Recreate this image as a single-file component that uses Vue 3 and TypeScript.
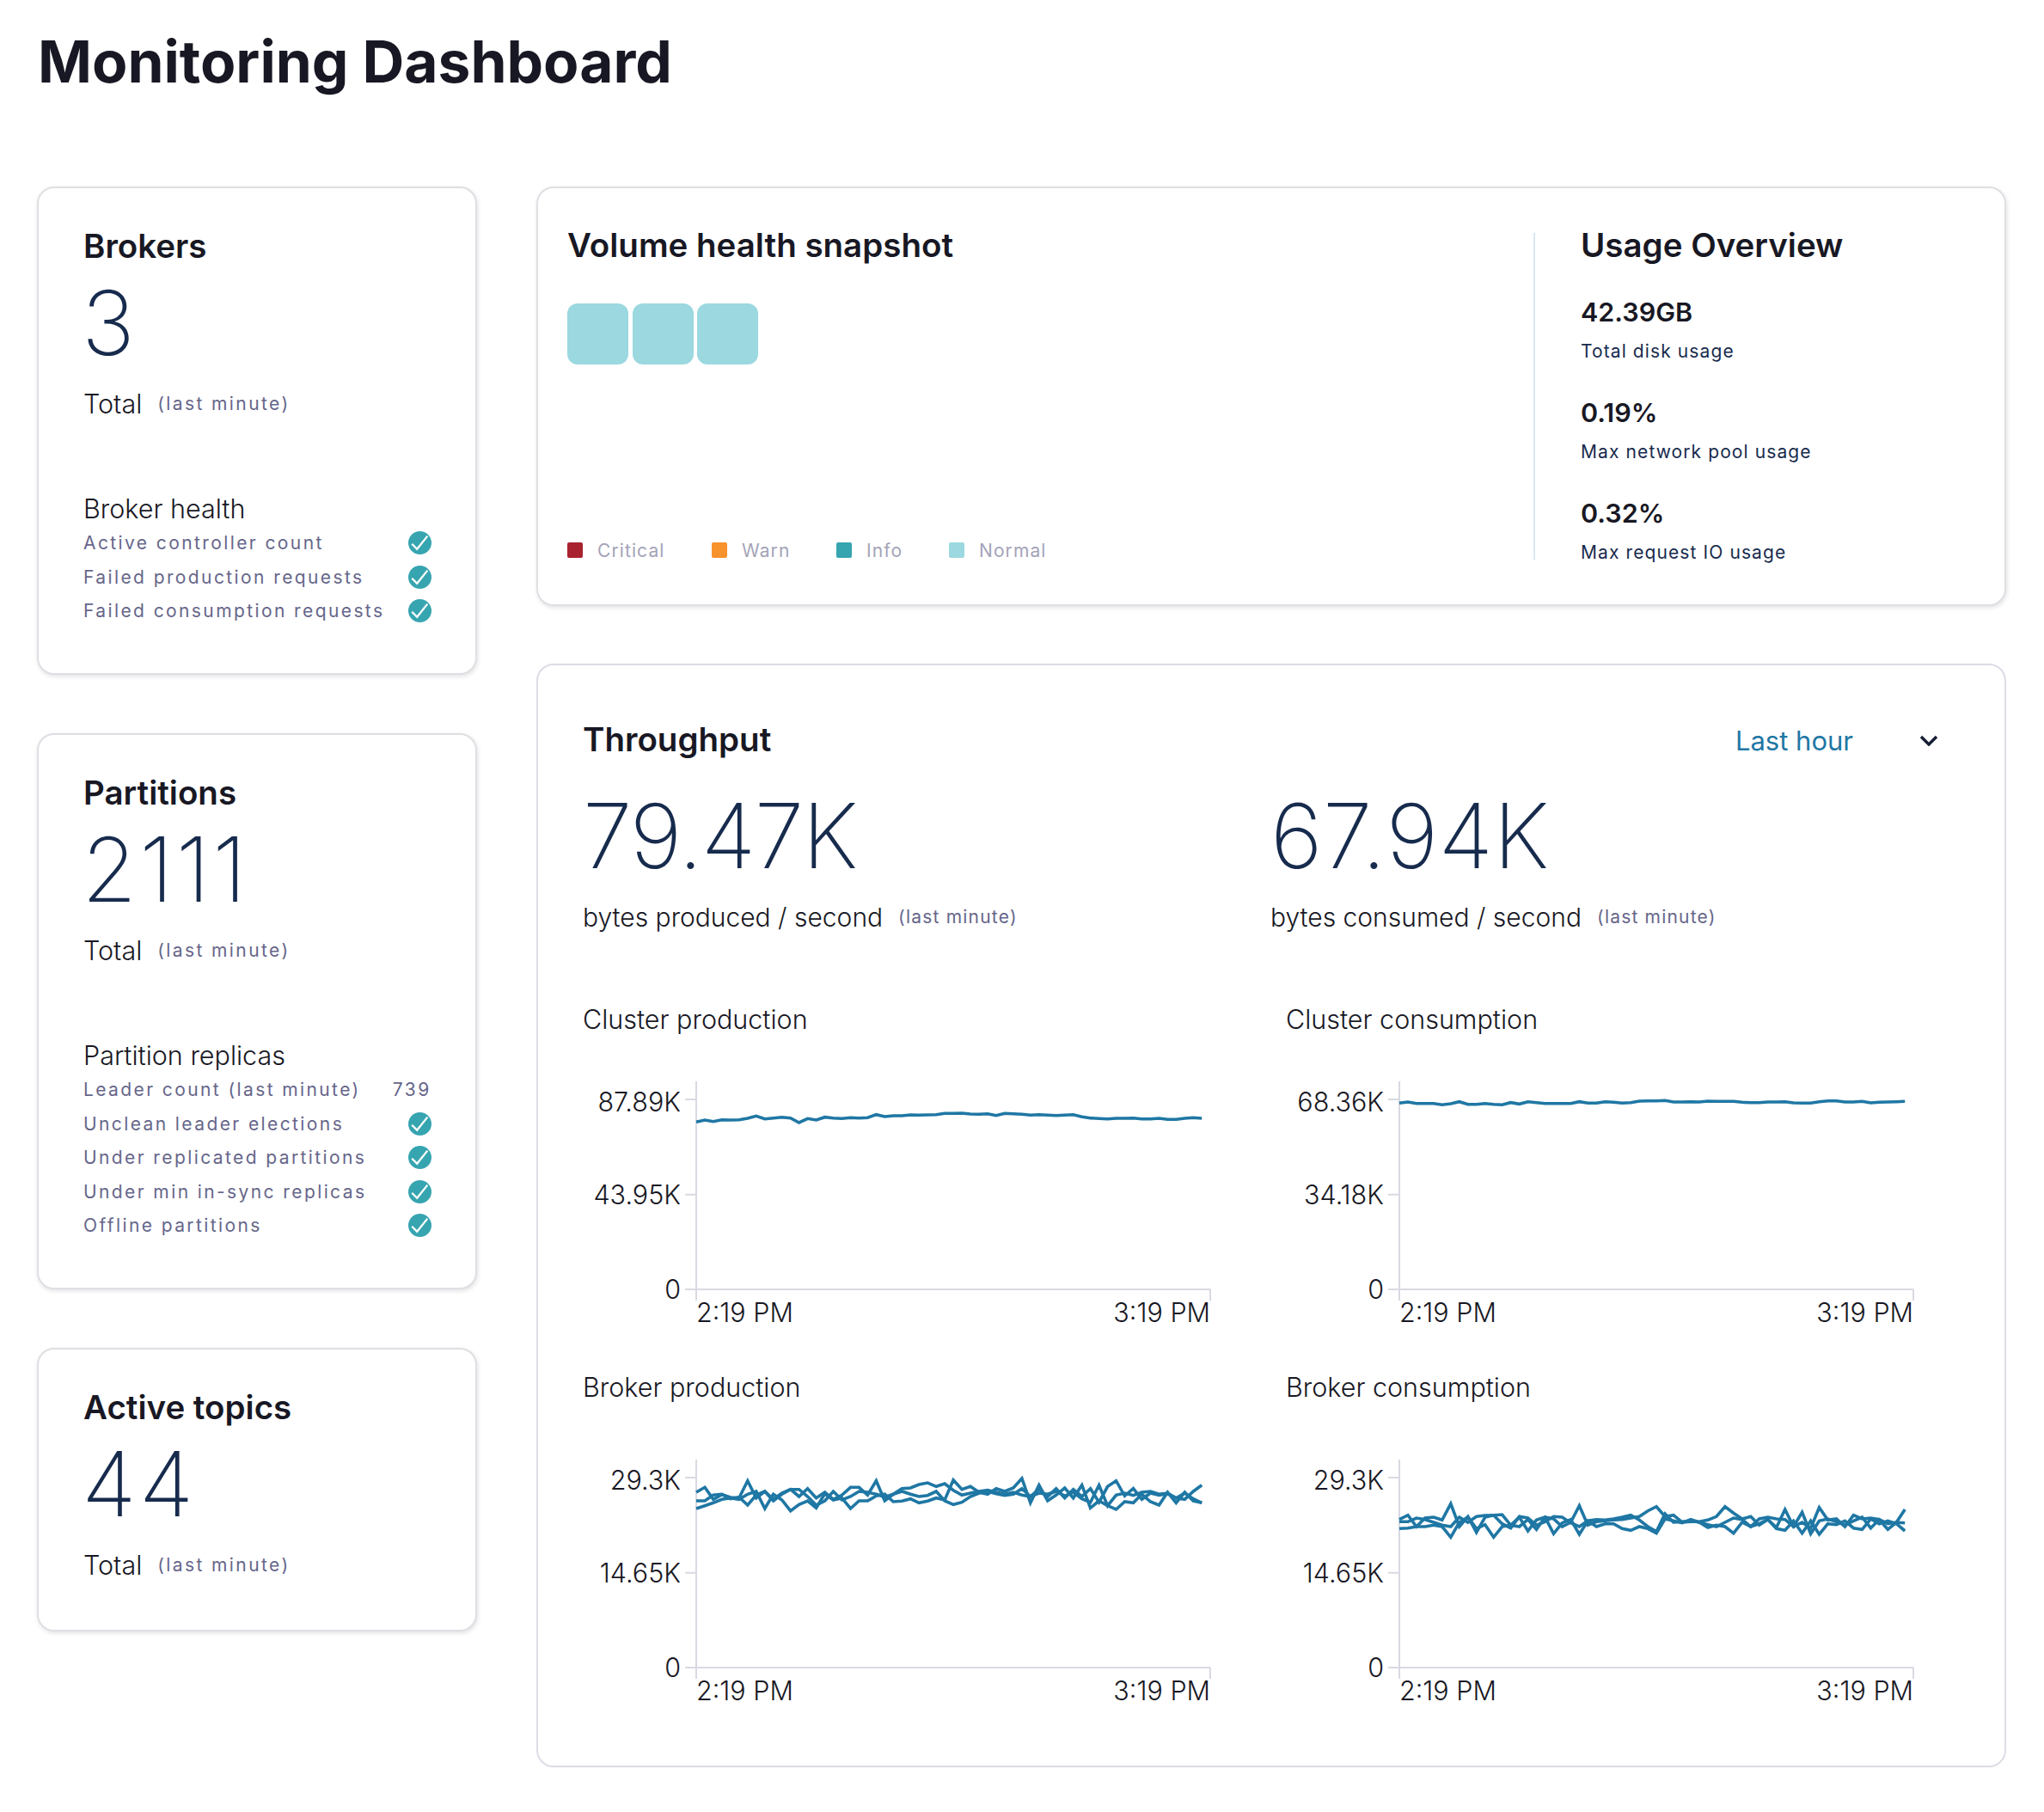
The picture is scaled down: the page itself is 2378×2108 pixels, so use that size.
<script setup lang="ts">
type Row = { label: string; value?: string }
type Stat = { title: string; total: string; section?: string; rows?: Row[] }
type Chart = { title: string; top: string; mid: string; series: number[][]; offset: number; later?: boolean }

const stats: Stat[] = [
  {
    title: 'Brokers',
    total: '3',
    section: 'Broker health',
    rows: [
      { label: 'Active controller count' },
      { label: 'Failed production requests' },
      { label: 'Failed consumption requests' },
    ],
  },
  {
    title: 'Partitions',
    total: '2111',
    section: 'Partition replicas',
    rows: [
      { label: 'Leader count (last minute)', value: '739' },
      { label: 'Unclean leader elections' },
      { label: 'Under replicated partitions' },
      { label: 'Under min in-sync replicas' },
      { label: 'Offline partitions' },
    ],
  },
  { title: 'Active topics', total: '44' },
]

const legend = [
  { name: 'Critical', color: '#a8222f', width: 168 },
  { name: 'Warn', color: '#f7922c', width: 145 },
  { name: 'Info', color: '#36a5b0', width: 131 },
  { name: 'Normal', color: '#9bd8df', width: 120 },
]

const usage = [
  { value: '42.39GB', label: 'Total disk usage' },
  { value: '0.19%', label: 'Max network pool usage' },
  { value: '0.32%', label: 'Max request IO usage' },
]

const totals = [
  { value: '79.47K', label: 'bytes produced / second', spacing: -1.8 },
  { value: '67.94K', label: 'bytes consumed / second', spacing: 0.4 },
]

// y values read off the reference, in crop pixels
const charts: Chart[] = [
  {
    title: 'Cluster production',
    top: '87.89K',
    mid: '43.95K',
    offset: -100,
    series: [
      [493, 486, 491, 485, 486, 485, 480, 472, 482, 479, 476, 479, 495, 481, 486, 476, 479, 481, 478, 479, 478, 467, 474, 471, 471, 468, 469, 468, 467, 463, 463, 462, 465, 466, 464, 470, 463, 464, 466, 469, 467, 469, 470, 469, 467, 475, 479, 481, 482, 480, 480, 479, 482, 482, 480, 484, 484, 480, 478, 480],
    ],
  },
  {
    title: 'Cluster consumption',
    top: '68.36K',
    mid: '34.18K',
    offset: -100,
    series: [
      [427, 423, 428, 428, 428, 433, 429, 422, 431, 431, 428, 431, 433, 425, 430, 422, 425, 428, 428, 428, 428, 422, 427, 427, 422, 424, 427, 425, 420, 419, 419, 418, 423, 423, 422, 423, 420, 421, 421, 421, 424, 425, 425, 423, 423, 422, 426, 427, 427, 422, 419, 419, 423, 423, 421, 426, 424, 423, 422, 421],
    ],
  },
  {
    title: 'Broker production',
    top: '29.3K',
    mid: '14.65K',
    offset: -20,
    later: true,
    series: [
      [225, 208, 250, 233, 243, 245, 185, 245, 222, 250, 228, 215, 240, 212, 245, 225, 250, 235, 208, 208, 235, 185, 255, 232, 212, 210, 198, 192, 205, 195, 218, 235, 228, 222, 218, 225, 232, 225, 235, 240, 215, 240, 212, 245, 215, 240, 212, 260, 205, 185, 238, 212, 250, 228, 235, 230, 245, 250, 222, 200],
      [255, 255, 235, 232, 248, 242, 270, 235, 222, 255, 232, 215, 215, 240, 270, 255, 222, 252, 240, 222, 225, 232, 242, 232, 222, 232, 240, 236, 222, 255, 268, 260, 240, 228, 222, 230, 236, 232, 212, 240, 228, 232, 222, 238, 225, 248, 260, 200, 272, 235, 228, 236, 225, 222, 232, 228, 245, 228, 248, 262],
      [282, 272, 262, 250, 245, 250, 232, 222, 282, 232, 252, 290, 268, 255, 280, 230, 252, 245, 282, 255, 255, 238, 232, 258, 256, 248, 262, 256, 245, 252, 182, 215, 205, 225, 232, 212, 222, 210, 177, 262, 200, 255, 235, 210, 245, 200, 280, 255, 272, 285, 258, 262, 232, 258, 270, 225, 262, 225, 255, 262],
    ],
  },
  {
    title: 'Broker consumption',
    top: '29.3K',
    mid: '14.65K',
    offset: -20,
    later: true,
    series: [
      [320, 305, 345, 315, 312, 322, 265, 345, 310, 365, 312, 305, 303, 340, 345, 320, 355, 312, 318, 345, 330, 272, 340, 328, 325, 322, 320, 315, 310, 290, 275, 310, 305, 330, 328, 328, 322, 310, 275, 298, 318, 310, 340, 320, 348, 285, 345, 330, 350, 278, 322, 318, 345, 305, 318, 315, 320, 355, 330, 285],
      [328, 328, 315, 320, 330, 340, 345, 312, 330, 310, 306, 305, 335, 350, 310, 315, 340, 328, 310, 312, 332, 345, 325, 320, 322, 318, 312, 305, 322, 345, 362, 300, 330, 328, 325, 330, 338, 345, 330, 315, 320, 345, 318, 312, 318, 320, 345, 295, 370, 325, 318, 328, 340, 325, 312, 350, 320, 335, 330, 332],
      [352, 350, 345, 345, 340, 345, 382, 330, 312, 352, 338, 382, 345, 340, 312, 360, 322, 312, 370, 332, 320, 372, 325, 345, 335, 335, 352, 358, 345, 352, 368, 318, 325, 332, 320, 330, 348, 340, 345, 368, 330, 345, 335, 320, 352, 358, 325, 368, 325, 372, 335, 338, 325, 350, 355, 318, 335, 325, 335, 360],
    ],
  },
]

function toPoints(values: number[], offset: number): string {
  return values
    .map((v, i) => `${(132 + i * 9.97).toFixed(1)},${(v / 3 + offset).toFixed(1)}`)
    .join(' ')
}
</script>

<template>
  <div class="page">
    <h1>Monitoring Dashboard</h1>
    <div class="layout">
      <div class="left">
        <section v-for="stat in stats" :key="stat.title" class="card stat">
          <h2>{{ stat.title }}</h2>
          <div class="big">{{ stat.total }}</div>
          <div class="caption">
            <span>Total</span>
            <small>(last minute)</small>
          </div>
          <template v-if="stat.section">
            <h3>{{ stat.section }}</h3>
            <div v-for="row in stat.rows" :key="row.label" class="row">
              <span>{{ row.label }}</span>
              <span v-if="row.value" class="row-value">{{ row.value }}</span>
              <svg v-else class="check" viewBox="0 0 27 27" width="27" height="27">
                <circle cx="13.5" cy="13.5" r="13.5" fill="#36a5b0" />
                <path d="M4.2 14.8l6 6L22.3 5.6" fill="none" stroke="#fff" stroke-width="2.3" />
              </svg>
            </div>
          </template>
        </section>
      </div>

      <div class="right">
        <section class="card volume">
          <div class="snapshot">
            <h2>Volume health snapshot</h2>
            <div class="cells">
              <i v-for="n in 3" :key="n"></i>
            </div>
            <div class="legend">
              <div
                v-for="item in legend"
                :key="item.name"
                class="legend-item"
                :style="{ width: item.width + 'px' }"
              >
                <b :style="{ background: item.color }"></b>
                <span>{{ item.name }}</span>
              </div>
            </div>
          </div>
          <div class="usage">
            <h2>Usage Overview</h2>
            <div v-for="item in usage" :key="item.label" class="usage-item">
              <strong>{{ item.value }}</strong>
              <span>{{ item.label }}</span>
            </div>
          </div>
        </section>

        <section class="card throughput">
          <div class="head">
            <h2>Throughput</h2>
            <div class="range">
              <span>Last hour</span>
              <svg viewBox="0 0 22 13" width="22" height="13">
                <path d="M2 2l9 9 9-9" fill="none" stroke="#151d33" stroke-width="3.4" />
              </svg>
            </div>
          </div>
          <div class="totals">
            <div v-for="item in totals" :key="item.label">
              <div class="big" :style="{ letterSpacing: item.spacing + 'px' }">{{ item.value }}</div>
              <div class="caption">
                <span>{{ item.label }}</span>
                <small>(last minute)</small>
              </div>
            </div>
          </div>
          <div class="charts">
            <div v-for="chart in charts" :key="chart.title" class="chart">
              <h4>{{ chart.title }}</h4>
              <svg :class="{ later: chart.later }" viewBox="0 0 740 300" width="740" height="300">
                <g class="axis">
                  <path d="M132 17V272M730 259V272M119 38H132M119 148.7H132M119 259H730" />
                </g>
                <text x="114" y="51.7" text-anchor="end">{{ chart.top }}</text>
                <text x="114" y="160" text-anchor="end">{{ chart.mid }}</text>
                <text x="114" y="269.5" text-anchor="end">0</text>
                <text x="132" y="297">2:19 PM</text>
                <text x="730" y="297" text-anchor="end">3:19 PM</text>
                <polyline
                  v-for="(line, i) in chart.series"
                  :key="i"
                  :points="toPoints(line, chart.offset)"
                  class="line"
                />
              </svg>
            </div>
          </div>
        </section>
      </div>
    </div>
  </div>
</template>

<style>
html,
body {
  background: #fff;
}
</style>

<style scoped>
.page {
  width: 2378px;
  box-sizing: border-box;
  padding: 32px 44px 53px 43px;
  font-family: Inter, 'Liberation Sans', sans-serif;
  color: #181824;
}
h1 {
  margin: 0 0 105px 1px;
  font-size: 67.6px;
  line-height: 80px;
  font-weight: 700;
}
h2 {
  margin: 0;
  font-size: 38.5px;
  line-height: 48px;
  font-weight: 600;
}
.layout {
  display: flex;
  gap: 69px;
}
.left {
  flex: none;
  width: 512px;
  display: flex;
  flex-direction: column;
  gap: 68px;
}
.right {
  flex: 1;
  min-width: 0;
  display: flex;
  flex-direction: column;
  gap: 67px;
}
.card {
  box-sizing: border-box;
  background: #fff;
  border: 2px solid #dfdfe4;
  border-radius: 20px;
  box-shadow: 1px 2px 5px rgba(30, 30, 50, 0.13);
}
.stat {
  padding: 43px 51px 52px 52px;
}
.stat:last-child {
  padding-bottom: 55px;
}
.big {
  margin-top: 9px;
  font-size: 104px;
  line-height: 112px;
  font-weight: 200;
  color: #172b4d;
}
.stat .big {
  margin-left: -2px;
  letter-spacing: 3px;
}
.caption {
  display: flex;
  align-items: center;
  gap: 18px;
  margin-top: 19px;
  font-size: 30.5px;
  line-height: 40px;
  font-weight: 300;
}
.caption small {
  font-size: 21px;
  font-weight: 400;
  letter-spacing: 2.4px;
  color: #66668a;
}
h3 {
  margin: 82px 0 0;
  font-size: 30.5px;
  line-height: 40px;
  font-weight: 300;
}
.row {
  display: flex;
  align-items: center;
  justify-content: space-between;
  height: 39.6px;
  font-size: 21px;
  letter-spacing: 2.4px;
  color: #66668a;
}
.row-value {
  letter-spacing: 2.6px;
}
.check {
  display: block;
}
.volume {
  display: flex;
  padding: 42px 0 46px 34px;
}
.snapshot {
  flex: 1;
}
.cells {
  display: flex;
  gap: 4.5px;
  margin-top: 44px;
}
.cells i {
  width: 71px;
  height: 71px;
  border-radius: 12px;
  background: #9bd8df;
}
.legend {
  display: flex;
  align-items: center;
  margin-top: 201px;
  height: 30px;
}
.legend-item {
  display: flex;
  align-items: center;
  gap: 17px;
  font-size: 21px;
  letter-spacing: 1.1px;
  color: #a3a3b8;
}
.legend-item b {
  width: 18px;
  height: 18px;
  border-radius: 2px;
}
.usage {
  flex: none;
  width: 548px;
  box-sizing: border-box;
  margin: 10px 0 6px;
  padding: 0 0 0 53px;
  border-left: 2px solid #d6eaf3;
}
.usage h2 {
  margin-top: -10px;
}
.usage-item strong {
  display: block;
  margin-top: 38px;
  font-size: 30.5px;
  line-height: 36px;
  font-weight: 600;
}
.usage-item:first-of-type strong {
  margin-top: 36px;
}
.usage-item span {
  display: block;
  margin-top: 13px;
  font-size: 21px;
  line-height: 30px;
  letter-spacing: 1.1px;
  color: #172b4d;
}
.usage-item:last-child span {
  margin-bottom: -7px;
}
.throughput {
  padding: 62px 77px 73px 52px;
  box-shadow: none;
  border-color: #dcdce6;
}
.head {
  display: flex;
  align-items: center;
  justify-content: space-between;
}
.range {
  display: flex;
  align-items: center;
  gap: 77px;
  padding-top: 3px;
  font-size: 31px;
  line-height: 45px;
  color: #1f77a4;
}
.totals {
  display: flex;
  margin-top: 23px;
}
.totals > div {
  flex: none;
  width: 800px;
}
.totals .caption {
  margin-top: 19px;
  font-size: 30px;
}
.totals small {
  letter-spacing: 1.2px;
}
.charts {
  display: grid;
  grid-template-columns: 818px 1fr;
  row-gap: 53px;
  margin-top: 79px;
}
h4 {
  margin: 0;
  font-size: 30.5px;
  line-height: 40px;
  font-weight: 300;
}
.chart svg {
  display: block;
  margin-top: 35px;
  overflow: visible;
}
.chart svg.later {
  margin-top: 47px;
}
.chart text {
  font-size: 30.5px;
  font-weight: 300;
  fill: #181824;
}
.axis path {
  fill: none;
  stroke: #d9d9e3;
  stroke-width: 2;
}
.line {
  fill: none;
  stroke: #1f77a4;
  stroke-width: 3.6;
}
</style>
